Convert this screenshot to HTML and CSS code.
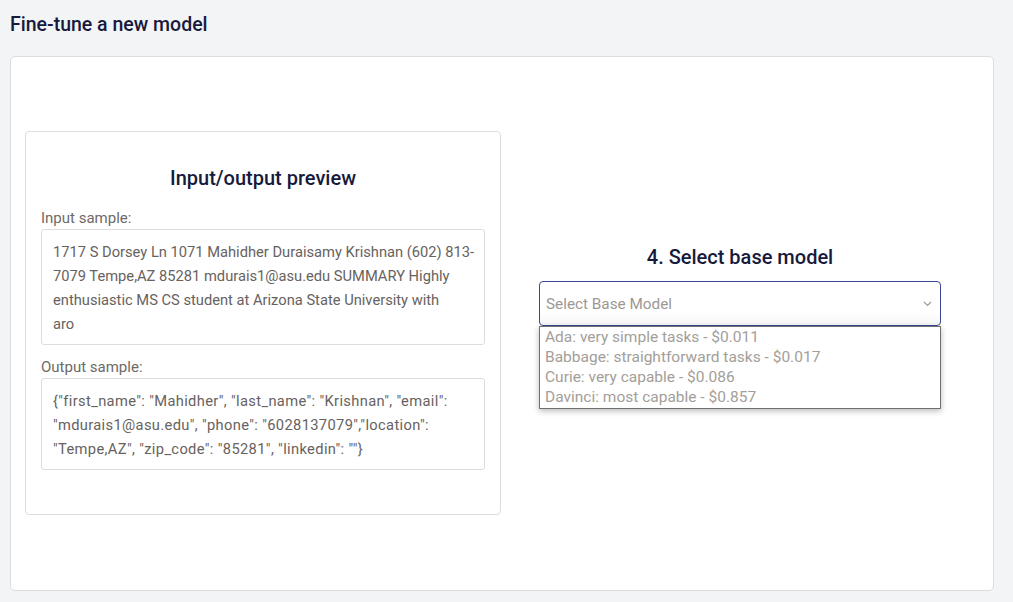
FILE: index.html
```html
<!DOCTYPE html>
<html lang="en">
<head>
<meta charset="utf-8">
<title>Fine-tune a new model</title>
<link rel="stylesheet" href="styles.css">
</head>
<body>
<div class="page">
  <h1 class="page-title">Fine-tune a new model</h1>
  <div class="card">
    <div class="preview">
      <h2 class="preview-title">Input/output preview</h2>
      <div class="field-label">Input sample:</div>
      <div class="sample">1717 S Dorsey Ln 1071 Mahidher Duraisamy Krishnan (602) 813-<br>7079 Tempe,AZ 85281 mdurais1@asu.edu SUMMARY Highly<br>enthusiastic MS CS student at Arizona State University with<br>aro</div>
      <div class="field-label second">Output sample:</div>
      <div class="sample json">{"first_name": "Mahidher", "last_name": "Krishnan", "email":<br>"mdurais1@asu.edu", "phone": "6028137079","location":<br>"Tempe,AZ", "zip_code": "85281", "linkedin": ""}</div>
    </div>
    <div class="model-col">
      <div class="model-box">
        <h2 class="model-title">4. Select base model</h2>
        <div class="select">
          <span class="placeholder">Select Base Model</span>
          <svg class="chevron" width="9" height="6" viewBox="0 0 9 6"><path d="M1 1l3.5 3.5L8 1" fill="none" stroke="#9a9a9a" stroke-width="1.2"/></svg>
        </div>
        <ul class="options">
          <li>Ada: very simple tasks - $0.011</li>
          <li>Babbage: straightforward tasks - $0.017</li>
          <li>Curie: very capable - $0.086</li>
          <li>Davinci: most capable - $0.857</li>
        </ul>
      </div>
    </div>
  </div>
</div>
</body>
</html>
```

FILE: styles.css
```css
* { box-sizing: border-box; }
html, body { margin: 0; padding: 0; }
body {
  background: #f3f4f6;
  font-family: Roboto, "Liberation Sans", sans-serif;
  color: #1c2045;
  width: 1013px;
  height: 602px;
  overflow: hidden;
}
.page {
  padding: 13px 19px 11px 10px;
  height: 602px;
  display: flex;
  flex-direction: column;
}
.page-title {
  margin: 0 0 19px 0;
  font-size: 19.5px;
  line-height: 24px;
  font-weight: 500;
  color: #171a3c;
}
.card {
  flex: 1;
  background: #fff;
  border: 1px solid #dddddd;
  border-radius: 5px;
  padding: 74px 14px 75px 14px;
  display: flex;
}
.preview {
  width: 476px;
  border: 1px solid #dddddd;
  border-radius: 4px;
  padding: 34px 15px 44px 15px;
}
.preview-title {
  margin: 0 0 18px 0;
  text-align: center;
  font-size: 20px;
  line-height: 24px;
  font-weight: 500;
  color: #171a3c;
}
.field-label {
  font-size: 15px;
  line-height: 20px;
  color: #6e6a66;
  margin-bottom: 1px;
}
.field-label.second { margin-top: 12px; }
.sample {
  border: 1px solid #dddddd;
  border-radius: 3px;
  padding: 10px 10px 8px 11px;
  font-size: 14.7px;
  line-height: 24px;
  color: #67625e;
  white-space: nowrap;
  overflow: hidden;
}
.sample.json { letter-spacing: 0.35px; }
.model-col {
  flex: 1;
  display: flex;
  align-items: center;
  justify-content: center;
}
.model-box {
  width: 402px;
  margin-top: 8px;
}
.model-title {
  margin: 0 0 12px 0;
  text-align: center;
  font-size: 20px;
  line-height: 24px;
  font-weight: 500;
  color: #171a3c;
}
.select {
  height: 45px;
  border: 1px solid #3b4796;
  border-radius: 4px;
  padding: 0 8px 0 6px;
  display: flex;
  align-items: center;
  justify-content: space-between;
  background: linear-gradient(#ffffff 70%, #f6f6f6);
}
.placeholder {
  font-size: 15.3px;
  color: #9c9894;
  padding-top: 1px;
}
.chevron { margin-top: 1px; }
.options {
  list-style: none;
  margin: 0;
  padding: 0 0 1px 0;
  border: 1px solid #707070;
  background: #fff;
  box-shadow: 0 2px 6px rgba(0,0,0,0.28);
}
.options li {
  font-size: 15.5px;
  line-height: 20px;
  padding-left: 5px;
  color: #a39e99;
}
```
